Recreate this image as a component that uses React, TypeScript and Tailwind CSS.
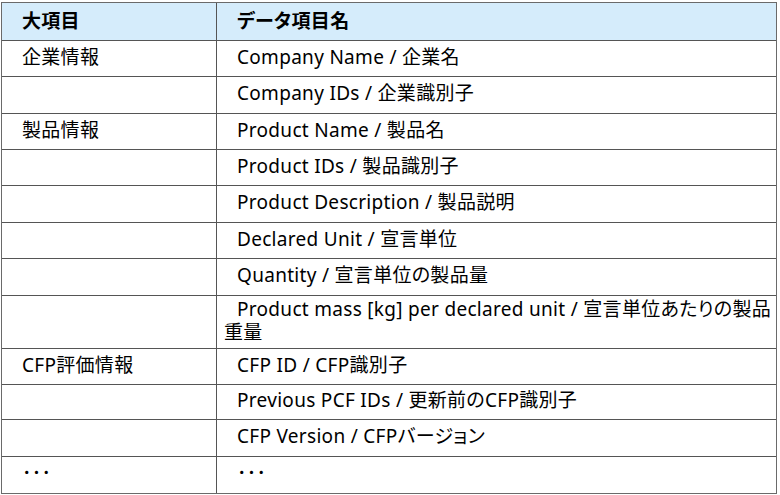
import React from "react";

type Row = { major: string; item: string; h: string };

const rows: Row[] = [
  { major: "企業情報", item: "Company Name / 企業名", h: "h-[36px]" },
  { major: "", item: "Company IDs / 企業識別子", h: "h-[37px]" },
  { major: "製品情報", item: "Product Name / 製品名", h: "h-[36px]" },
  { major: "", item: "Product IDs / 製品識別子", h: "h-[36px]" },
  { major: "", item: "Product Description / 製品説明", h: "h-[37px]" },
  { major: "", item: "Declared Unit / 宣言単位", h: "h-[36px]" },
  { major: "", item: "Quantity / 宣言単位の製品量", h: "h-[37px]" },
  {
    major: "",
    item: "Product mass [kg] per declared unit / 宣言単位あたりの製品重量",
    h: "h-[53px]",
  },
  { major: "CFP評価情報", item: "CFP ID / CFP識別子", h: "h-[36px]" },
  { major: "", item: "Previous PCF IDs / 更新前のCFP識別子", h: "h-[35px]" },
  { major: "", item: "CFP Version / CFPバージョン", h: "h-[37px]" },
  { major: "･･･", item: "･･･", h: "h-[36px]" },
];

export default function App() {
  return (
    <div className="w-[780px] h-[495px] bg-white pt-[2px] pl-[1px] font-['Noto_Sans','Noto_Sans_CJK_JP',sans-serif] text-[19px] tracking-[0.3px] [font-feature-settings:'palt'] text-black">
      <div className="w-[776px] border border-[#6a6a6a]">
        {/* header */}
        <div className="flex h-[38px] border-b border-[#555] bg-[#d5ecfb] font-bold">
          <div className="w-[215px] shrink-0 border-r border-[#555] pl-[20px] pb-[1px] flex items-center">
            大項目
          </div>
          <div className="flex-1 pl-[7px] pb-[1px] flex items-center indent-[13px]">
            データ項目名
          </div>
        </div>

        {rows.map((r, i) => (
          <div
            key={i}
            className={`flex ${r.h} ${i < rows.length - 1 ? "border-b border-[#555]" : ""}`}
          >
            <div className="w-[215px] shrink-0 border-r border-[#555] pl-[20px] pb-[3px] flex items-center">
              {r.major}
            </div>
            <div className="flex-1 pl-[7px] pr-[4px] pb-[3px] flex items-center leading-[23px]">
              <span className="indent-[13px] block">{r.item}</span>
            </div>
          </div>
        ))}
      </div>
    </div>
  );
}
